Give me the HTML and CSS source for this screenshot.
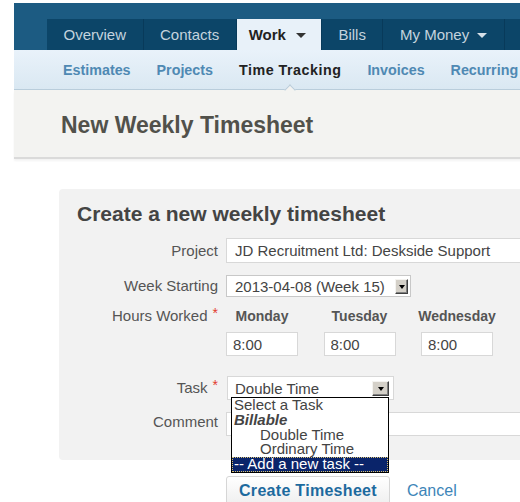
FILE: index.html
```html
<!DOCTYPE html>
<html lang="en">
<head>
<meta charset="utf-8">
<title>New Weekly Timesheet</title>
<link rel="stylesheet" href="styles.css">
</head>
<body>
<div class="page">
  <nav class="topnav">
    <ul class="tabs">
      <li class="tab">Overview</li>
      <li class="tab">Contacts</li>
      <li class="tab tab-active">Work<span class="caret"></span></li>
      <li class="tab">Bills</li>
      <li class="tab">My Money<span class="caret caret-light"></span></li>
      <li class="tab">Banking</li>
    </ul>
  </nav>
  <nav class="subnav">
    <a class="sublink">Estimates</a>
    <a class="sublink">Projects</a>
    <a class="sublink sublink-active">Time Tracking</a>
    <a class="sublink">Invoices</a>
    <a class="sublink">Recurring</a>
  </nav>
  <header class="page-head">
    <h1>New Weekly Timesheet</h1>
  </header>

  <main class="content">
    <form class="card">
      <h2>Create a new weekly timesheet</h2>

      <div class="row">
        <label class="label">Project</label>
        <input class="field field-wide" type="text" value="JD Recruitment Ltd: Deskside Support">
      </div>

      <div class="row row-week">
        <label class="label">Week Starting</label>
        <div class="classic-select">
          <span class="classic-value">2013-04-08 (Week 15)</span>
          <span class="classic-btn"><span class="arrow"></span></span>
        </div>
      </div>

      <div class="row row-hours">
        <label class="label label-top">Hours Worked<span class="req">*</span></label>
        <div class="days">
          <div class="day">
            <div class="day-name">Monday</div>
            <input class="field field-time" type="text" value="8:00">
          </div>
          <div class="day">
            <div class="day-name">Tuesday</div>
            <input class="field field-time" type="text" value="8:00">
          </div>
          <div class="day">
            <div class="day-name">Wednesday</div>
            <input class="field field-time" type="text" value="8:00">
          </div>
        </div>
      </div>

      <div class="row">
        <label class="label">Task<span class="req">*</span></label>
        <div class="task-select">
          <span class="task-value">Double Time</span>
          <span class="classic-btn task-btn"><span class="arrow"></span></span>
          <ul class="options">
            <li class="opt">Select a Task</li>
            <li class="opt opt-group">Billable</li>
            <li class="opt opt-indent">Double Time</li>
            <li class="opt opt-indent">Ordinary Time</li>
            <li class="opt opt-selected">-- Add a new task --</li>
          </ul>
        </div>
      </div>

      <div class="row row-last">
        <label class="label label-comment">Comment</label>
        <input class="field field-wide" type="text" value="">
      </div>
    </form>

    <div class="actions">
      <button class="btn" type="button">Create Timesheet</button>
      <a class="cancel">Cancel</a>
    </div>
  </main>
</div>
</body>
</html>
```
FILE: styles.css
```css
html, body {
  margin: 0;
  padding: 0;
  background: #fff;
  overflow: hidden;
}

body {
  width: 520px;
  height: 502px;
  font-family: "Liberation Sans", Arial, sans-serif;
  color: #555;
}

.page {
  margin: 3px 0 0 14px;
  width: 640px;
}

/* top navigation */
.topnav {
  height: 47px;
  background: #1c5b82;
  display: flex;
  align-items: flex-end;
  padding-left: 33px;
}

.tabs {
  list-style: none;
  margin: 0;
  padding: 0;
  display: flex;
  height: 31px;
}

.tab {
  display: flex;
  align-items: center;
  padding: 0 16.5px;
  background: #0c4568;
  color: #c4d3de;
  font-size: 15px;
  border-right: 1px solid #083a5a;
}

.tab-active {
  background: #e8f1f9;
  color: #222;
  font-weight: bold;
  padding: 0 15px 0 12px;
}

.caret {
  width: 0;
  height: 0;
  border-left: 5px solid transparent;
  border-right: 5px solid transparent;
  border-top: 5px solid #333;
  margin-left: 10px;
  margin-top: 1px;
}

.caret-light {
  border-top-color: #d6e0e8;
  margin-left: 8px;
}

/* sub navigation */
.subnav {
  position: relative;
  z-index: 2;
  height: 39px;
  display: flex;
  gap: 26px;
  padding-left: 49px;
  background: linear-gradient(#e9f2fa, #dae8f2);
  border-bottom: 1px solid #b9cddb;
}

.sublink {
  position: relative;
  display: flex;
  align-items: center;
  font-size: 14.3px;
  font-weight: bold;
  color: #4f89b3;
  padding-top: 1px;
}

.sublink-active {
  color: #222;
  letter-spacing: 0.5px;
}

.sublink-active::after {
  content: "";
  position: absolute;
  left: 50%;
  bottom: -5px;
  width: 7px;
  height: 7px;
  margin-left: -4px;
  background: #f3f3f1;
  border-top: 1px solid #b9cddb;
  border-left: 1px solid #b9cddb;
  transform: rotate(45deg);
}

/* page heading */
.page-head {
  box-sizing: border-box;
  height: 69px;
  background: #f3f3f1;
  border-bottom: 2px solid #dadada;
  box-shadow: 0 2px 2px rgba(0, 0, 0, 0.05);
  padding: 21px 0 0 47px;
}

.page-head h1 {
  margin: 0;
  font-size: 23px;
  line-height: 28px;
  color: #51514b;
}

/* form card */
.content {
  padding: 30px 0 0 45px;
}

.card {
  width: 560px;
  background: #f2f2f2;
  border-radius: 4px;
  padding: 13px 0 24px 18px;
  margin: 0;
}

.card h2 {
  margin: 0 0 12px;
  font-size: 21px;
  line-height: 24px;
  color: #444;
}

.row {
  display: grid;
  grid-template-columns: 141px auto;
  column-gap: 8px;
  align-items: center;
  justify-items: start;
  margin-bottom: 12px;
}

.row-week {
  margin-bottom: 11px;
}

.row-hours {
  margin-bottom: 20px;
  align-items: start;
}

.row-last {
  margin-bottom: 0;
}

.label {
  justify-self: end;
  font-size: 15px;
  color: #555;
  line-height: 16px;
}

.label-comment {
  position: relative;
  top: -2px;
}

.req {
  color: #e23b2e;
  font-size: 14px;
  margin-left: 5px;
  position: relative;
  top: -3px;
}

.field {
  box-sizing: border-box;
  height: 25px;
  border: 1px solid #d8d8d8;
  background: #fff;
  font-family: inherit;
  font-size: 15px;
  color: #444;
  padding: 0 8px;
  margin: 0;
  outline: none;
}

.field-wide {
  width: 330px;
}

.row-last .field-wide {
  height: 24px;
}

/* classic windows-style select */
.classic-select {
  box-sizing: border-box;
  width: 185px;
  height: 22px;
  border: 1px solid #c8c8c8;
  background: #fff;
  display: flex;
  align-items: center;
  justify-content: space-between;
  padding: 0 2px 0 8px;
  font-size: 15px;
  color: #444;
}

.classic-btn {
  box-sizing: border-box;
  width: 13px;
  height: 15px;
  background: #d4d0c8;
  border: 1px solid;
  border-color: #f4f3f0 #404040 #404040 #f4f3f0;
  box-shadow: inset -1px -1px 0 #808080;
  display: flex;
  align-items: center;
  justify-content: center;
}

.arrow {
  width: 0;
  height: 0;
  border-left: 3.5px solid transparent;
  border-right: 3.5px solid transparent;
  border-top: 4px solid #000;
  margin-top: 1px;
}

/* hours */
.days {
  display: flex;
  gap: 25.5px;
}

.day {
  width: 72px;
  display: flex;
  flex-direction: column;
  align-items: center;
}

.day-name {
  font-size: 14px;
  font-weight: bold;
  line-height: 16px;
  color: #555;
  margin-bottom: 8px;
  white-space: nowrap;
}

.field-time {
  width: 72px;
  height: 24px;
  padding: 0 6px;
}

/* task select with open list */
.task-select {
  position: relative;
  box-sizing: border-box;
  width: 167px;
  height: 24px;
  margin-left: 1px;
  border: 1px solid #d8d8d8;
  background: #fff;
  display: flex;
  align-items: center;
  justify-content: space-between;
  padding: 0 4px 0 7px;
  font-size: 15px;
  color: #444;
}

.task-btn {
  width: 17px;
  height: 15px;
}

.options {
  position: absolute;
  left: 3px;
  top: 20px;
  width: 158px;
  box-sizing: border-box;
  margin: 0;
  padding: 0;
  list-style: none;
  background: #fff;
  border: 1px solid #000;
  z-index: 3;
}

.opt {
  font-size: 15px;
  line-height: 14.8px;
  color: #444;
  padding-left: 2px;
  white-space: nowrap;
}

.opt-group {
  font-weight: bold;
  font-style: italic;
}

.opt-indent {
  padding-left: 28px;
}

.opt-selected {
  background: #0a246a;
  color: #fff;
  outline: 1px dotted #d8c070;
  outline-offset: -1px;
}

/* actions */
.actions {
  display: flex;
  align-items: center;
  margin: 16px 0 0 167px;
}

.btn {
  height: 29px;
  padding: 0 12px;
  background: linear-gradient(#ffffff, #efefef);
  border: 1px solid #d6d6d6;
  border-radius: 3px;
  font-family: inherit;
  font-size: 16px;
  letter-spacing: 0.3px;
  font-weight: bold;
  color: #1d6a9e;
}

.cancel {
  margin-left: 17px;
  font-size: 16px;
  color: #3d85b8;
}
```
